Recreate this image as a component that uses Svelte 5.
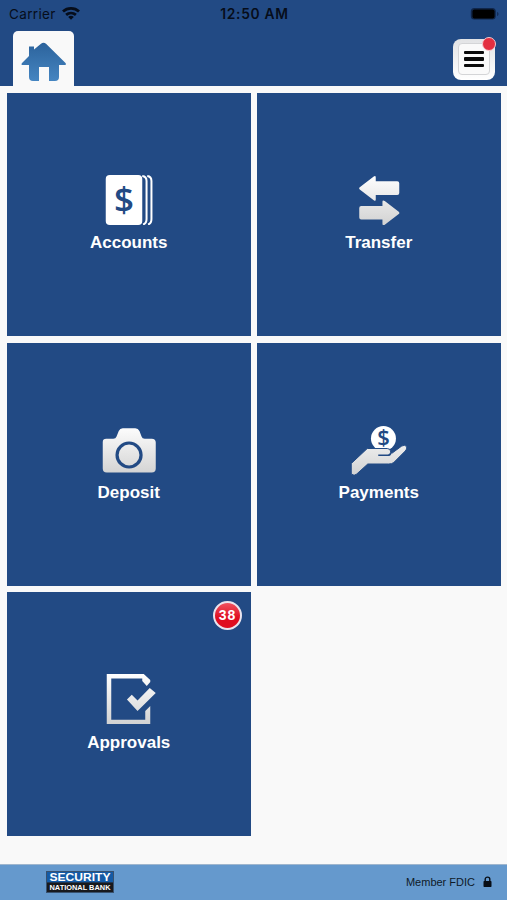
<script>
	let pendingApprovals = $state(38);

	let tiles = $derived([
		{ id: 'accounts', label: 'Accounts' },
		{ id: 'transfer', label: 'Transfer' },
		{ id: 'deposit', label: 'Deposit' },
		{ id: 'payments', label: 'Payments' },
		{ id: 'approvals', label: 'Approvals', badge: pendingApprovals }
	]);
</script>

<div class="app">
	<header>
		<div class="status">
			<div class="carrier">
				<span>Carrier</span>
				<svg width="18" height="13" viewBox="0 0 18 13">
					<g fill="none" stroke="#060d1a" stroke-width="2.8">
						<path d="M1 4.5C5.500 .4 12.500 .4 17 4.500" />
						<path d="M4.100 7.900C7 5.400 11 5.400 13.900 7.900" />
					</g>
					<path fill="#060d1a" d="M6.200 9.900C7.800 8.500 10.200 8.500 11.800 9.900L9 12.800Z" />
				</svg>
			</div>
			<span class="time">12:50 AM</span>
			<svg class="battery" width="30" height="14" viewBox="0 0 30 14">
				<rect x=".8" y="1" width="25" height="11.500" rx="3.500" fill="#10264a" />
				<rect x="2.500" y="2.500" width="22" height="9" rx="2" fill="#000" />
				<path d="M27 5C29 5.500 29 8.500 27 9Z" fill="#132e5a" />
			</svg>
		</div>
		<div class="nav">
			<button class="home" aria-label="Home">
				<svg width="61" height="55" viewBox="0 0 61 55">
					<defs>
						<linearGradient id="roof" x1="0" y1="0" x2="0" y2="1">
							<stop offset="0" stop-color="#2c639c" />
							<stop offset="1" stop-color="#4585c1" />
						</linearGradient>
					</defs>
					<path fill="url(#roof)" d="M16 15.500H21V18.500L28 12.700Q30.500 11 33 12.700L52.500 32Q54 34 51 34H46V46Q46 50 42 50H36V36H26V50H20Q16 50 16 46V34H10Q7.500 34 9 32L16 25Z" />
				</svg>
			</button>
			<button class="menu" aria-label="Menu">
				<span class="lines"><i></i><i></i><i></i></span>
				<span class="dot"></span>
			</button>
		</div>
	</header>

	<main>
		{#each tiles as tile (tile.id)}
			<button class="tile">
				<svg width="100" height="60" viewBox="-1.25 0 100 60">
					<defs>
						<linearGradient id="shade-{tile.id}" gradientUnits="userSpaceOnUse" x1="0" y1="10" x2="0" y2="60">
							<stop offset="0" stop-color="#fff" />
							<stop offset="1" stop-color="#d2d2d2" />
						</linearGradient>
					</defs>
					{#if tile.id === 'accounts'}
						<rect x="25.500" y="10" width="36.500" height="50" rx="4" fill="#fff" />
						<path fill="none" stroke="#fff" stroke-width="2" d="M62 11Q66.300 11.500 66.300 16V54Q66.300 58.500 62.800 59.500M67 11Q71.200 11.500 71.200 16V54Q71.200 58.500 67.800 59.500" />
						<text class="dollar" x="43.700" y="47.300" font-size="35">$</text>
					{:else if tile.id === 'transfer'}
						<g fill="url(#shade-transfer)">
							<path d="M29 23.700Q28.500 23 29.500 22.200L43.500 11.500Q45.500 10.300 45.500 12.500V16.200H67Q69 16.200 69 18.200V28Q69 30 67 30H45.500V34.500Q45.500 36.700 43.500 35.300L29.500 24.600Z" />
							<path d="M69 47.600Q69.500 48.300 68.500 49L54.500 59.700Q52.200 61 52.200 58.700V54.500H31Q29 54.500 29 52.500V43Q29 41 31 41H52.200V36.800Q52.200 34.600 54.500 36L68.500 46.700Z" />
						</g>
					{:else if tile.id === 'deposit'}
						<path fill="url(#shade-deposit)" d="M22.500 27Q22.500 23.700 26 23.700H33Q35.500 23.700 36.300 21.500L38.500 16Q39.700 13.200 42.500 13.200H55Q58 13.200 59.200 16L61.300 21.500Q62 23.700 64.500 23.700H71.500Q75.500 23.700 75.500 27.500V53.500Q75.500 57.500 71.500 57.500H26.500Q22.500 57.500 22.500 53.500Z" />
						<circle cx="48.800" cy="40" r="12" fill="none" stroke="#224a84" stroke-width="3.200" />
					{:else if tile.id === 'payments'}
						<circle cx="53.200" cy="23.500" r="12.500" fill="#fff" />
						<text class="dollar" x="53.200" y="30" font-size="22">$</text>
						<path fill="url(#shade-payments)" stroke="#224a84" stroke-width="1" d="M37 33.500H57Q60.500 33.500 60.500 37V38H62L71.500 31Q75 29 76.500 32Q77 34 75 36L63.500 47.500Q61.500 49 58.500 49H37.500L26.500 59Q24 61.500 21 59V48.500Z" />
						<path fill="none" stroke="#224a84" stroke-width="1.600" d="M48 40.300H57.500Q60 40.300 60.500 38" />
					{:else}
						<g fill="url(#shade-approvals)">
							<path fill-rule="evenodd" d="M26.500 10H63.500L70 16V18L66.500 22L62 17V14.500H31V55.800H65V47L70 42V60.800H26.500Z" />
							<path d="M46.700 35.500L51.500 30.800L57.300 36.500L69.500 24L75.500 29L57.300 47Z" />
						</g>
					{/if}
				</svg>
				<span class="label">{tile.label}</span>
				{#if tile.badge}
					<span class="badge">{tile.badge}</span>
				{/if}
			</button>
		{/each}
	</main>

	<footer>
		<div class="logo">
			<svg width="68" height="22" viewBox="0 0 68 22">
				<rect width="68" height="22" fill="#38516e" />
				<rect x="1" y="1" width="66" height="10.500" fill="#145aa5" />
				<rect x="1" y="11.500" width="66" height="9.500" fill="#18191d" />
				<text x="3.500" y="9.600" font-size="10" textLength="61" lengthAdjust="spacingAndGlyphs">SECURITY</text>
				<text x="3.500" y="18.800" font-size="6.800" textLength="61" lengthAdjust="spacingAndGlyphs">NATIONAL BANK</text>
			</svg>
		</div>
		<div class="fdic">
			<span>Member FDIC</span>
			<svg width="9" height="12" viewBox="0 0 9 12">
				<rect x=".5" y="5" width="8" height="6" rx=".7" fill="#080e16" />
				<path d="M2.200 5.500V3.300C2.200.4 6.800.4 6.800 3.300V5.500" fill="none" stroke="#080e16" stroke-width="1.400" />
			</svg>
		</div>
	</footer>
</div>

<style>
	:global(body) {
		margin: 0;
	}

	.app {
		display: flex;
		flex-direction: column;
		height: 900px;
		background: #f9f9f9;
		font-family: 'Liberation Sans', Arial, sans-serif;
		overflow: hidden;
	}

	button {
		border: 0;
		padding: 0;
		font: inherit;
	}

	svg {
		display: block;
	}

	header {
		height: 86px;
		background: #224a84;
	}

	.status {
		display: grid;
		grid-template-columns: 1fr auto 1fr;
		align-items: center;
		height: 27px;
		padding: 0 7px 0 9px;
		font-family: Inter, sans-serif;
		font-size: 13.5px;
		color: #060d1a;
	}

	.carrier {
		display: flex;
		align-items: center;
		gap: 6px;
		letter-spacing: 0.35px;
	}

	.time {
		font-size: 13.8px;
		font-weight: 600;
		letter-spacing: 0.7px;
	}

	.battery {
		justify-self: end;
	}

	.nav {
		display: flex;
		justify-content: space-between;
		padding: 4px 12px 0 13px;
	}

	.home {
		height: 55px;
		border-radius: 5px 5px 0 0;
		background: #f9f9f9;
	}

	.menu {
		position: relative;
		box-sizing: border-box;
		width: 42px;
		height: 41px;
		margin-top: 8px;
		padding: 4px 5px 5px;
		border-radius: 8px;
		background: linear-gradient(#e2e3e5, #fff);
	}

	.lines {
		display: flex;
		flex-direction: column;
		align-items: center;
		justify-content: center;
		gap: 3px;
		box-sizing: border-box;
		height: 100%;
		border: 1px solid #d4d5d7;
		border-radius: 4px;
		background: #fafafa;
	}

	.lines i {
		width: 20px;
		height: 3.5px;
		border-radius: 1px;
		background: #0b0b0b;
	}

	.dot {
		position: absolute;
		top: -2px;
		right: -1px;
		width: 12px;
		height: 12px;
		border: 1px solid #f4c9ce;
		border-radius: 50%;
		background: #e32f40;
	}

	main {
		flex: 1;
		display: grid;
		grid-template-columns: 243.5px 243.5px;
		grid-auto-rows: 243.2px;
		align-content: start;
		gap: 6.5px;
		padding: 7px 6px 0 7px;
	}

	.tile {
		position: relative;
		display: flex;
		flex-direction: column;
		align-items: center;
		justify-content: flex-start;
		padding-top: 72px;
		background: #224a84;
		color: #fff;
	}

	.dollar {
		font-family: 'Open Sans', sans-serif;
		font-weight: 600;
		fill: #224a84;
		text-anchor: middle;
	}

	.label {
		margin-top: 8.4px;
		font-size: 17px;
		font-weight: bold;
		line-height: 20px;
	}

	.badge {
		position: absolute;
		top: 9px;
		right: 9px;
		box-sizing: border-box;
		width: 29px;
		height: 29px;
		border: 2px solid #e9e4ee;
		border-radius: 50%;
		background: linear-gradient(#ee5260, #df0d20 60%);
		font-size: 14px;
		font-weight: bold;
		letter-spacing: 0.8px;
		line-height: 25px;
		text-align: center;
		text-indent: 0.8px;
	}

	footer {
		display: flex;
		align-items: center;
		justify-content: space-between;
		box-sizing: border-box;
		height: 36px;
		padding: 0 15px 1px 46px;
		border-top: 1px solid #9fb6ce;
		background: #6599cd;
	}

	.logo text {
		font-weight: bold;
		fill: #fff;
	}

	.fdic {
		display: flex;
		align-items: center;
		gap: 8px;
		font-size: 11px;
		color: #0f1a28;
	}
</style>
